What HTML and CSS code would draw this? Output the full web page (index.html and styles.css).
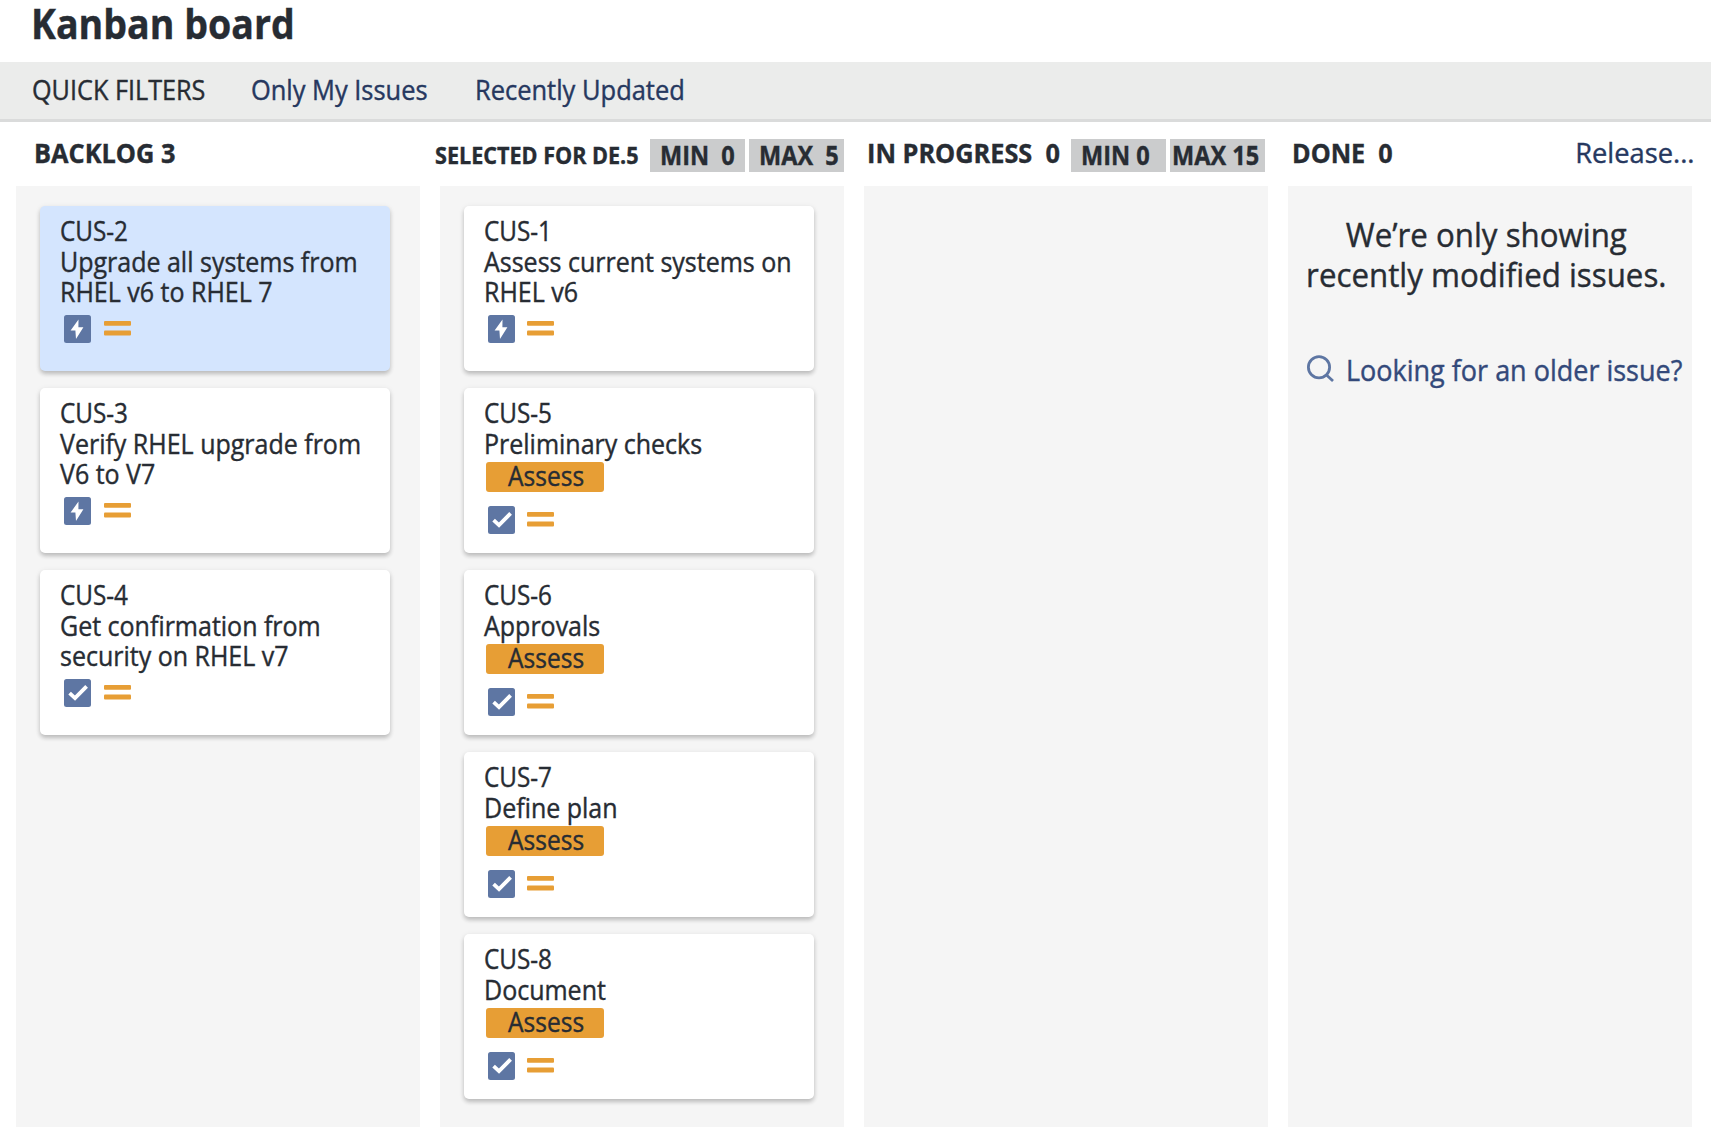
FILE: index.html
```html
<!DOCTYPE html>
<html lang="en">
<head>
<meta charset="utf-8">
<title>Kanban board</title>
<link rel="stylesheet" href="styles.css">
</head>
<body>
<svg class="sprite" aria-hidden="true">
  <symbol id="bolt" viewBox="0 0 27 28">
    <rect width="27" height="28" rx="2.5" fill="#5e76a3"/>
    <path d="M14.5 4.6 L6.6 15.5 H11.4 L12 24 L19.4 12.2 H14.4 Z" fill="#fff"/>
  </symbol>
  <symbol id="check" viewBox="0 0 27 28">
    <rect width="27" height="28" rx="2.5" fill="#5e76a3"/>
    <path d="M5.6 14.2 L11 19.2 L22.6 7.4" fill="none" stroke="#fff" stroke-width="3.8"/>
  </symbol>
  <symbol id="medium" viewBox="0 0 27 28">
    <rect x="0" y="6" width="27" height="4.8" rx="1" fill="#e79e35"/>
    <rect x="0" y="15.6" width="27" height="4.8" rx="1" fill="#e79e35"/>
  </symbol>
</svg>

<header class="title"><h1 class="fit">Kanban board</h1></header>
<nav class="filters">
  <span class="filter-label"><span class="fit">QUICK FILTERS</span></span>
  <a class="filter-mine"><span class="fit">Only My Issues</span></a>
  <a class="filter-recent"><span class="fit">Recently Updated</span></a>
</nav>

<main class="board">
  <section class="column">
    <div class="head"><h2 class="fit name-backlog">BACKLOG 3</h2></div>
    <div class="lane">
      <article class="card selected">
        <p class="key fit">CUS-2</p>
        <p class="fit">Upgrade all systems from<br>RHEL v6 to RHEL 7</p>
        <div class="icons"><svg><use href="#bolt"/></svg><svg><use href="#medium"/></svg></div>
      </article>
      <article class="card">
        <p class="key fit">CUS-3</p>
        <p class="fit">Verify RHEL upgrade from<br>V6 to V7</p>
        <div class="icons"><svg><use href="#bolt"/></svg><svg><use href="#medium"/></svg></div>
      </article>
      <article class="card">
        <p class="key fit">CUS-4</p>
        <p class="fit">Get confirmation from<br>security on RHEL v7</p>
        <div class="icons"><svg><use href="#check"/></svg><svg><use href="#medium"/></svg></div>
      </article>
    </div>
  </section>

  <section class="column second">
    <div class="head">
      <h2 class="fit name-selected">SELECTED FOR DE.5</h2>
      <div class="limits"><span class="limit"><b class="fit">MIN  0</b></span><span class="limit"><b class="fit">MAX  5</b></span></div>
    </div>
    <div class="lane">
      <article class="card">
        <p class="key fit">CUS-1</p>
        <p class="fit">Assess current systems on<br>RHEL v6</p>
        <div class="icons"><svg><use href="#bolt"/></svg><svg><use href="#medium"/></svg></div>
      </article>
      <article class="card">
        <p class="key fit">CUS-5</p>
        <p class="fit">Preliminary checks</p>
        <div class="tag"><span class="fit">Assess</span></div>
        <div class="icons"><svg><use href="#check"/></svg><svg><use href="#medium"/></svg></div>
      </article>
      <article class="card">
        <p class="key fit">CUS-6</p>
        <p class="fit">Approvals</p>
        <div class="tag"><span class="fit">Assess</span></div>
        <div class="icons"><svg><use href="#check"/></svg><svg><use href="#medium"/></svg></div>
      </article>
      <article class="card">
        <p class="key fit">CUS-7</p>
        <p class="fit">Define plan</p>
        <div class="tag"><span class="fit">Assess</span></div>
        <div class="icons"><svg><use href="#check"/></svg><svg><use href="#medium"/></svg></div>
      </article>
      <article class="card">
        <p class="key fit">CUS-8</p>
        <p class="fit">Document</p>
        <div class="tag"><span class="fit">Assess</span></div>
        <div class="icons"><svg><use href="#check"/></svg><svg><use href="#medium"/></svg></div>
      </article>
    </div>
  </section>

  <section class="column third">
    <div class="head">
      <h2 class="fit name-progress">IN PROGRESS  0</h2>
      <div class="limits"><span class="limit"><b class="fit">MIN 0</b></span><span class="limit tight"><b class="fit">MAX 15</b></span></div>
    </div>
    <div class="lane"></div>
  </section>

  <section class="column">
    <div class="head">
      <h2 class="fit name-done">DONE  0</h2>
      <a class="release fit">Release...</a>
    </div>
    <div class="lane done">
      <p class="notice"><span class="fit">We’re only showing<br>recently modified issues.</span></p>
      <a class="older">
        <svg viewBox="0 0 27 28"><circle cx="12" cy="12.2" r="10.6"/><path d="M19.2 19.8 L26 26"/></svg>
        <span class="fit">Looking for an older issue?</span>
      </a>
    </div>
  </section>
</main>
</body>
</html>
```
FILE: styles.css
```css
* {
  box-sizing: border-box;
}

body {
  margin: 0;
  height: 1127px;
  display: flex;
  flex-direction: column;
  overflow: hidden;
  background: #fff;
  color: #272c33;
  font-family: "Open Sans", "Noto Sans", sans-serif;
}

h1, h2, p {
  margin: 0;
}

.sprite {
  position: absolute;
  width: 0;
  height: 0;
}

/* Slightly condensed lettering used across the board */
.fit {
  display: block;
  width: max-content;
  white-space: pre;
  transform: scaleX(var(--fit, 0.943));
  transform-origin: left;
  -webkit-text-stroke: 0.4px currentColor;
}

.title {
  flex: none;
  height: 62px;
  padding-left: 30.5px;
}

.title h1 {
  --fit: 0.916;
  font-size: 41px;
  line-height: 46px;
}

.filters {
  flex: none;
  display: flex;
  height: 60px;
  padding-left: 31.5px;
  border-bottom: 3px solid #dadbdb;
  background: #ebeceb;
  font-size: 27px;
  line-height: 56px;
}

.filters a {
  color: #26385f;
}

.filter-label {
  --fit: 0.934;
  width: 219.5px;
}

.filter-mine {
  --fit: 0.941;
  width: 224px;
}

.board {
  flex: 1;
  display: grid;
  grid-template-columns: repeat(4, 404px);
  column-gap: 20px;
  padding-left: 16px;
}

.column {
  display: flex;
  flex-direction: column;
  min-width: 0;
}

.head {
  flex: none;
  display: flex;
  justify-content: space-between;
  height: 64px;
  line-height: 62px;
}

.head h2 {
  font-size: 27.5px;
}

.head .name-backlog {
  --fit: 0.922;
  margin-left: 18px;
}

.head .name-selected {
  --fit: 0.899;
  width: 200px;
  margin-left: -5px;
  font-size: 24px;
  line-height: 65px;
}

.head .name-progress {
  --fit: 0.92;
  width: 190px;
  margin-left: 3px;
}

.head .name-done {
  --fit: 0.915;
  margin-left: 4px;
}

.release {
  --fit: 0.974;
  margin-right: -2px;
  color: #26385f;
  font-size: 28px;
  line-height: 61px;
  transform-origin: right;
}

.limits {
  display: flex;
  gap: 4px;
  margin-top: 17px;
}

.third .limits {
  margin-right: 3px;
}

.limit {
  --fit: 0.905;
  width: 95px;
  height: 33px;
  padding-left: 9.5px;
  background: #cbcccd;
  font-size: 26px;
  line-height: 32px;
}

.third .limit.tight {
  padding-left: 2px;
}

.lane {
  flex: 1;
  display: flex;
  flex-direction: column;
  gap: 17px;
  padding: 20.4px 30px 0 24px;
  background: #f5f5f5;
}

.card {
  flex: none;
  height: 165px;
  padding: 10px 0 0 20.3px;
  border-radius: 5px;
  background: #fff;
  box-shadow: 0 3px 4px rgba(0, 0, 0, 0.2), 0 1px 6px rgba(0, 0, 0, 0.07);
  font-size: 26.5px;
  line-height: 30.2px;
}

.card.selected {
  background: #d4e5fe;
}

.key {
  --fit: 0.916;
}

.icons {
  display: flex;
  gap: 13px;
  margin: 8px 0 0 3.7px;
}

.icons svg {
  width: 27px;
  height: 28px;
}

.second .icons {
  gap: 12px;
}

.tag {
  --fit: 0.926;
  width: 118px;
  height: 30px;
  margin: 3px 0 14.4px 1.7px;
  padding-left: 22px;
  border-radius: 3px;
  background: #e79e35;
  line-height: 29px;
}

.tag + .icons {
  margin-top: 0;
}

.done {
  gap: 55px;
  padding: 29px 8px 0 0;
}

.notice {
  --fit: 0.962;
  align-self: center;
  font-size: 32.5px;
  line-height: 40px;
  text-align: center;
}

.notice .fit {
  transform-origin: center;
}

.older {
  --fit: 0.947;
  display: flex;
  gap: 11.5px;
  padding-left: 19px;
  color: #33497a;
  font-size: 28.5px;
  line-height: 40px;
}

.older svg {
  flex: none;
  width: 27px;
  height: 28px;
  margin-top: 5px;
  fill: none;
  stroke: #5e76a3;
  stroke-width: 2.8;
}
```
